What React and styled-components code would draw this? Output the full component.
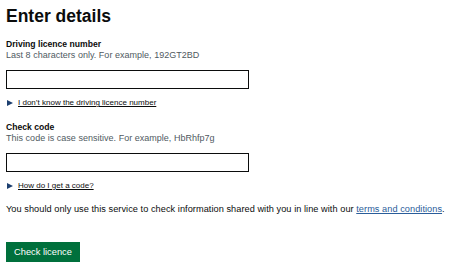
import React from 'react'
import styled, { createGlobalStyle } from 'styled-components'

const GlobalStyle = createGlobalStyle`
*{
  margin: 0;
  padding: 0;
  box-sizing: border-box;
}
body{
  background: #ffffff;
  font-family: "Liberation Sans", Arial, sans-serif;
  color: #0b0c0c;
}
`

const Page = styled.main`
  padding: 6px 6px 0 6px;
`

const Heading = styled.h1`
  font-size: 17.5px;
  line-height: 20px;
  font-weight: 700;
  margin-bottom: 13px;
`

const Field = styled.div`
  display: flex;
  flex-direction: column;
  align-items: flex-start;
  margin-bottom: ${p => p.gap || 0}px;
`

const Label = styled.label`
  font-size: 8.6px;
  line-height: 11px;
  font-weight: 700;
`

const Hint = styled.div`
  font-size: 9px;
  line-height: 11px;
  letter-spacing: 0.02px;
  color: #505a5f;
  margin-bottom: 9px;
`

const Input = styled.input`
  width: 243px;
  height: 19px;
  border: 1px solid #0b0c0c;
  background: #fff;
  font-family: inherit;
  font-size: 9px;
  padding: 0 3px;
`

const Summary = styled.div`
  display: flex;
  align-items: center;
  margin-top: 9px;
  font-size: 8px;
  line-height: 10px;
`

const Arrow = styled.span`
  width: 0;
  height: 0;
  border-top: 3px solid transparent;
  border-bottom: 3px solid transparent;
  border-left: 6px solid #1d3f70;
  margin: 0 5px 0 1px;
`

const SummaryText = styled.span`
  text-decoration: underline;
  text-decoration-thickness: 1px;
  text-underline-offset: 1px;
`

const Para = styled.p`
  font-size: 9.2px;
  line-height: 11px;
  letter-spacing: 0.05px;
  margin-bottom: 26px;
`

const Link = styled.a`
  color: #2a5d9a;
  text-decoration: underline;
  text-decoration-thickness: 1px;
  text-underline-offset: 1px;
`

const Button = styled.button`
  background: #00703c;
  color: #fff;
  border: 0;
  box-shadow: 0 1px 0 #002d18;
  font-family: inherit;
  font-size: 9.3px;
  height: 20px;
  padding: 0 8px;
  cursor: pointer;
`

const fields = [
  {
    id: 'licence',
    label: 'Driving licence number',
    hint: 'Last 8 characters only. For example, 192GT2BD',
    help: 'I don\u2019t know the driving licence number',
    gap: 14
  },
  {
    id: 'code',
    label: 'Check code',
    hint: 'This code is case sensitive. For example, HbRhfp7g',
    help: 'How do I get a code?',
    gap: 13
  }
]

export default function App() {
  return (
    <Page>
      <GlobalStyle />
      <Heading>Enter details</Heading>
      {fields.map(f => (
        <Field key={f.id} gap={f.gap}>
          <Label htmlFor={f.id}>{f.label}</Label>
          <Hint>{f.hint}</Hint>
          <Input id={f.id} type="text" />
          <Summary>
            <Arrow />
            <SummaryText>{f.help}</SummaryText>
          </Summary>
        </Field>
      ))}
      <Para>
        You should only use this service to check information shared with you in line with our{' '}
        <Link href="#">terms and conditions</Link>.
      </Para>
      <Button>Check licence</Button>
    </Page>
  )
}
